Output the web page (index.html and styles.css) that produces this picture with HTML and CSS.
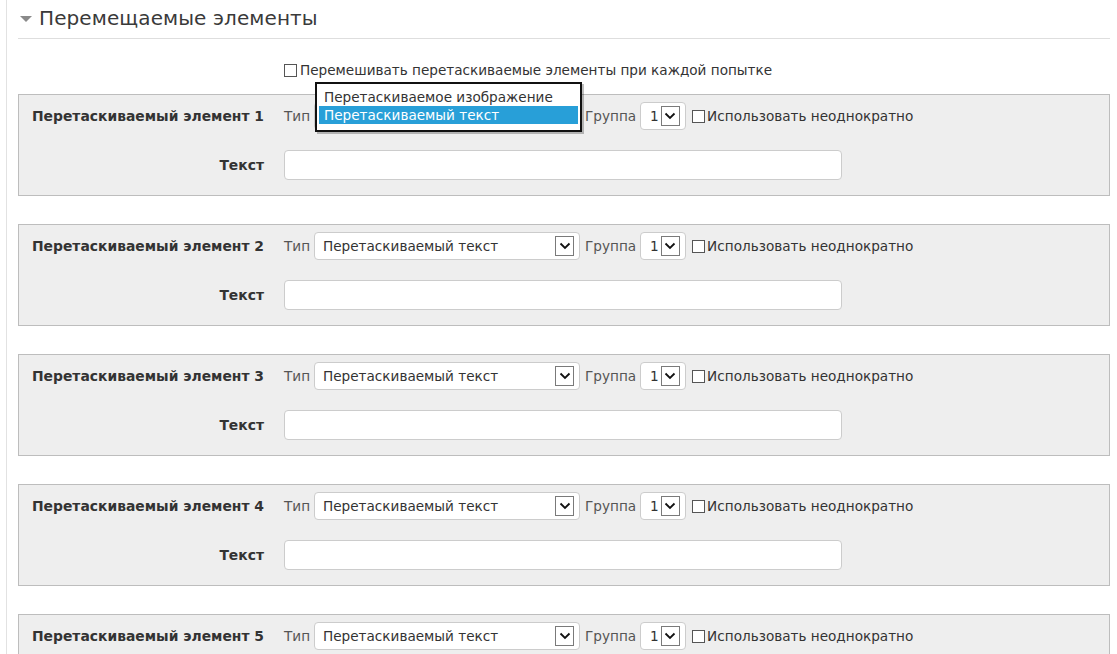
FILE: index.html
```html
<!DOCTYPE html>
<html lang="ru">
<head>
<meta charset="utf-8">
<title>Перемещаемые элементы</title>
<link rel="stylesheet" href="styles.css">
</head>
<body>
<div class="frame">
  <div class="content">
    <div class="legend">
      <span class="caret"></span>
      <span class="legend-text">Перемещаемые элементы</span>
    </div>
    <div class="shuffle-row">
      <span class="checkbox"></span>
      <span class="shuffle-text">Перемешивать перетаскиваемые элементы при каждой попытке</span>
    </div>

    <div class="panel">
      <div class="row">
        <div class="label">Перетаскиваемый элемент 1</div>
        <div class="fields">
          <span class="field-label">Тип</span>
          <div class="select type-select">
            <span class="select-value">Перетаскиваемый текст</span>
            <span class="arrow"><svg viewBox="0 0 12 8" width="12" height="8"><path d="M1.5 1.5 L6 6 L10.5 1.5" fill="none" stroke="#111" stroke-width="1.8"/></svg></span>
            <div class="popup">
              <div class="option">Перетаскиваемое изображение</div>
              <div class="option selected">Перетаскиваемый текст</div>
            </div>
          </div>
          <span class="field-label group-label">Группа</span>
          <div class="select group-select">
            <span class="select-value">1</span>
            <span class="arrow"><svg viewBox="0 0 12 8" width="12" height="8"><path d="M1.5 1.5 L6 6 L10.5 1.5" fill="none" stroke="#111" stroke-width="1.8"/></svg></span>
          </div>
          <span class="checkbox"></span>
          <span class="check-text">Использовать неоднократно</span>
        </div>
      </div>
      <div class="row row-text">
        <div class="label">Текст</div>
        <div class="fields"><div class="text-input"></div></div>
      </div>
    </div>

    <div class="panel">
      <div class="row">
        <div class="label">Перетаскиваемый элемент 2</div>
        <div class="fields">
          <span class="field-label">Тип</span>
          <div class="select type-select">
            <span class="select-value">Перетаскиваемый текст</span>
            <span class="arrow"><svg viewBox="0 0 12 8" width="12" height="8"><path d="M1.5 1.5 L6 6 L10.5 1.5" fill="none" stroke="#111" stroke-width="1.8"/></svg></span>
          </div>
          <span class="field-label group-label">Группа</span>
          <div class="select group-select">
            <span class="select-value">1</span>
            <span class="arrow"><svg viewBox="0 0 12 8" width="12" height="8"><path d="M1.5 1.5 L6 6 L10.5 1.5" fill="none" stroke="#111" stroke-width="1.8"/></svg></span>
          </div>
          <span class="checkbox"></span>
          <span class="check-text">Использовать неоднократно</span>
        </div>
      </div>
      <div class="row row-text">
        <div class="label">Текст</div>
        <div class="fields"><div class="text-input"></div></div>
      </div>
    </div>

    <div class="panel">
      <div class="row">
        <div class="label">Перетаскиваемый элемент 3</div>
        <div class="fields">
          <span class="field-label">Тип</span>
          <div class="select type-select">
            <span class="select-value">Перетаскиваемый текст</span>
            <span class="arrow"><svg viewBox="0 0 12 8" width="12" height="8"><path d="M1.5 1.5 L6 6 L10.5 1.5" fill="none" stroke="#111" stroke-width="1.8"/></svg></span>
          </div>
          <span class="field-label group-label">Группа</span>
          <div class="select group-select">
            <span class="select-value">1</span>
            <span class="arrow"><svg viewBox="0 0 12 8" width="12" height="8"><path d="M1.5 1.5 L6 6 L10.5 1.5" fill="none" stroke="#111" stroke-width="1.8"/></svg></span>
          </div>
          <span class="checkbox"></span>
          <span class="check-text">Использовать неоднократно</span>
        </div>
      </div>
      <div class="row row-text">
        <div class="label">Текст</div>
        <div class="fields"><div class="text-input"></div></div>
      </div>
    </div>

    <div class="panel">
      <div class="row">
        <div class="label">Перетаскиваемый элемент 4</div>
        <div class="fields">
          <span class="field-label">Тип</span>
          <div class="select type-select">
            <span class="select-value">Перетаскиваемый текст</span>
            <span class="arrow"><svg viewBox="0 0 12 8" width="12" height="8"><path d="M1.5 1.5 L6 6 L10.5 1.5" fill="none" stroke="#111" stroke-width="1.8"/></svg></span>
          </div>
          <span class="field-label group-label">Группа</span>
          <div class="select group-select">
            <span class="select-value">1</span>
            <span class="arrow"><svg viewBox="0 0 12 8" width="12" height="8"><path d="M1.5 1.5 L6 6 L10.5 1.5" fill="none" stroke="#111" stroke-width="1.8"/></svg></span>
          </div>
          <span class="checkbox"></span>
          <span class="check-text">Использовать неоднократно</span>
        </div>
      </div>
      <div class="row row-text">
        <div class="label">Текст</div>
        <div class="fields"><div class="text-input"></div></div>
      </div>
    </div>

    <div class="panel">
      <div class="row">
        <div class="label">Перетаскиваемый элемент 5</div>
        <div class="fields">
          <span class="field-label">Тип</span>
          <div class="select type-select">
            <span class="select-value">Перетаскиваемый текст</span>
            <span class="arrow"><svg viewBox="0 0 12 8" width="12" height="8"><path d="M1.5 1.5 L6 6 L10.5 1.5" fill="none" stroke="#111" stroke-width="1.8"/></svg></span>
          </div>
          <span class="field-label group-label">Группа</span>
          <div class="select group-select">
            <span class="select-value">1</span>
            <span class="arrow"><svg viewBox="0 0 12 8" width="12" height="8"><path d="M1.5 1.5 L6 6 L10.5 1.5" fill="none" stroke="#111" stroke-width="1.8"/></svg></span>
          </div>
          <span class="checkbox"></span>
          <span class="check-text">Использовать неоднократно</span>
        </div>
      </div>
      <div class="row row-text">
        <div class="label">Текст</div>
        <div class="fields"><div class="text-input"></div></div>
      </div>
    </div>
  </div>
</div>
</body>
</html>
```

FILE: styles.css
```css
* { box-sizing: border-box; }

html, body {
  margin: 0;
  padding: 0;
  background: #fff;
  overflow: hidden;
}

body {
  font-family: "DejaVu Sans", Verdana, sans-serif;
  font-size: 13.6px;
  color: #333;
  height: 654px;
}

.frame {
  margin-left: 6px;
  border-left: 1px solid #e2e2e2;
  height: 654px;
  padding-right: 7px;
  overflow: hidden;
}

.content {
  padding-left: 11px;
}

.legend {
  display: flex;
  align-items: center;
  height: 39px;
  border-bottom: 1px solid #dedede;
  padding-left: 2px;
  padding-bottom: 2px;
}

.caret {
  width: 0;
  height: 0;
  border-left: 6px solid transparent;
  border-right: 6px solid transparent;
  border-top: 6px solid #8a8a8a;
  margin-right: 7px;
  margin-top: 1px;
}

.legend-text {
  font-size: 20px;
  color: #3a3a3a;
  letter-spacing: 0.1px;
}

.shuffle-row {
  display: flex;
  align-items: center;
  padding-left: 266px;
  height: 55px;
  padding-top: 7px;
}

.shuffle-text {
  margin-left: 3px;
  color: #333;
}

.checkbox {
  display: inline-block;
  width: 13px;
  height: 13px;
  border: 1px solid #555;
  background: #fff;
  flex: none;
}

.panel {
  border: 1px solid #bdbdbd;
  background: #eee;
  padding: 7px 0 15px 12px;
  margin-bottom: 28px;
}

.row {
  display: flex;
  align-items: center;
  height: 28px;
}

.row-text {
  margin-top: 20px;
  height: 30px;
}

.label {
  width: 233px;
  flex: none;
  text-align: right;
  font-weight: bold;
  font-size: 13.9px;
  color: #333;
  margin-right: 20px;
  white-space: nowrap;
}

.fields {
  display: flex;
  align-items: center;
}

.field-label {
  color: #555;
  margin-right: 4px;
}

.group-label {
  margin-left: 5px;
}

.select {
  position: relative;
  display: flex;
  align-items: center;
  height: 28px;
  background: #fff;
  border: 1px solid #ccc;
  border-radius: 4px;
  padding-left: 8px;
}

.type-select {
  width: 266px;
}

.group-select {
  width: 46px;
  margin-right: 6px;
  padding-left: 9px;
}

.select-value {
  flex: 1;
  color: #333;
  white-space: nowrap;
}

.arrow {
  display: flex;
  align-items: center;
  justify-content: center;
  width: 19px;
  height: 20px;
  border: 1px solid #7a7a7a;
  background: #fff;
  margin-right: 5px;
  flex: none;
}

.group-select .select-value {
  flex: none;
  margin-right: 2px;
}

.check-text {
  margin-left: 2px;
  color: #333;
}

.text-input {
  width: 558px;
  height: 30px;
  background: #fff;
  border: 1px solid #ccc;
  border-radius: 4px;
}

.popup {
  position: absolute;
  left: 0;
  top: -21px;
  width: 267px;
  height: 50px;
  border: 2px solid #111;
  background: #fff;
  padding: 5px 2px 0 2px;
  box-shadow: 2px 2px 0 rgba(0,0,0,0.25);
  z-index: 5;
}

.option {
  height: 17px;
  line-height: 17px;
  padding-left: 5px;
  color: #333;
  white-space: nowrap;
}

.option.selected {
  background: #289fd8;
  color: #fff;
  height: 18px;
  line-height: 18px;
}
```
